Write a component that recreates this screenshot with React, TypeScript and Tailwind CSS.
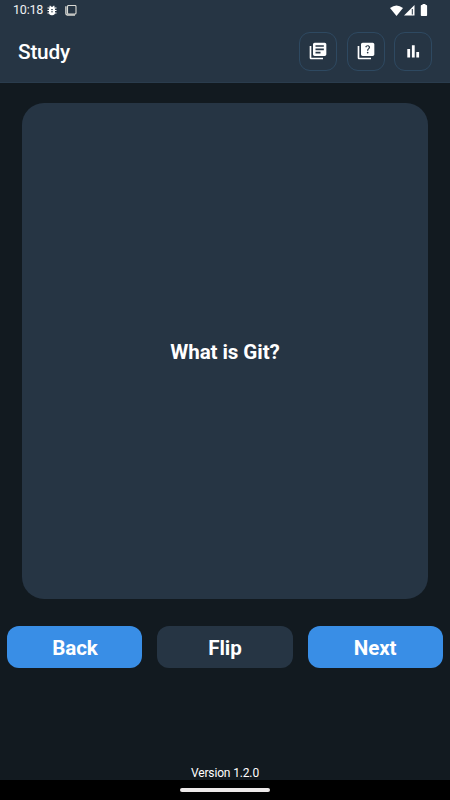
import type { ReactNode } from 'react';
import { MdLibraryBooks, MdQuiz } from 'react-icons/md';

function StatusBar() {
  return (
    <div className="flex h-5 items-center pl-[13px] pr-[22.5px]">
      <span className="w-[34px] text-[12.5px] leading-5 tracking-[-0.2px] text-[#f0f1f2]">10:18</span>
      <svg className="h-[11px] w-[10px] shrink-0" viewBox="0 0 10 11" fill="none" stroke="white">
        <path d="M.5 3H9.5M.5 5.5H9.5M.5 8H9.5M2.6.8L4 2.2M7.4.8L6 2.2" strokeWidth="1.2" />
        <rect x="2" y="1.8" width="6" height="8.4" rx="2.6" fill="white" stroke="none" />
        <path d="M4 4.6h2M4 6.8h2" stroke="#263544" strokeWidth=".8" />
      </svg>
      <svg className="ml-[8px] h-[11px] w-[12px]" viewBox="0 0 12 11" fill="none" stroke="#d9d9d4">
        <rect x="2.5" y="0.5" width="8.5" height="8.5" rx="1" strokeWidth="1.1" />
        <path d="M0.9 1.2v7.4a1.4 1.4 0 0 0 1.4 1.4H10" strokeWidth="1.4" />
      </svg>
      <svg className="ml-auto h-[11px] w-[13px]" viewBox="0 0 13 11" fill="white">
        <path d="M0 3Q6.5-2 13 3L6.5 11Z" />
      </svg>
      <svg className="ml-[1px] h-[11px] w-[11px]" viewBox="0 0 11 11">
        <path d="M0 10.5L10.5 0V10.5Z" fill="white" />
        <path d="M8.3 4V9.5" stroke="#263544" strokeWidth="1" />
      </svg>
      <svg className="ml-[5px] h-[12px] w-[8px]" viewBox="0 0 8 12" fill="white">
        <path d="M2.5 0h3v1H6.3a.8.8 0 0 1 .8.8v9.4a.8.8 0 0 1-.8.8H1.6a.8.8 0 0 1-.8-.8V1.8a.8.8 0 0 1 .8-.8h.9Z" />
      </svg>
    </div>
  );
}

function IconButton({ label, children }: { label: string; children: ReactNode }) {
  return (
    <button
      aria-label={label}
      className="flex h-[39px] w-[38px] items-center justify-center rounded-[11px] border border-[#2e4961]"
    >
      {children}
    </button>
  );
}

function ActionButton({ label, className }: { label: string; className: string }) {
  return (
    <button
      className={`flex h-[42px] flex-1 items-center justify-center rounded-xl pt-[2px] text-[20.6px] font-bold leading-6 tracking-[-0.1px] ${className}`}
    >
      {label}
    </button>
  );
}

export default function App() {
  return (
    <div className="flex h-[800px] w-[450px] flex-col overflow-hidden bg-[#121a20] font-[Roboto,'Liberation_Sans',sans-serif] text-white">
      <header className="h-[83px] shrink-0 border-b border-[#2a3c4d] bg-[#263544]">
        <StatusBar />
        <div className="flex h-[62px] items-center justify-between pl-[18px] pr-[18px]">
          <h1 className="pt-[2px] text-[20.8px] font-medium leading-6 tracking-[-0.2px]">Study</h1>
          <div className="flex gap-[9.3px]">
            <IconButton label="Library"><MdLibraryBooks className="size-5" /></IconButton>
            <IconButton label="Quiz"><MdQuiz className="size-5" /></IconButton>
            <IconButton label="Statistics">
              <svg className="h-[13px] w-[13px]" viewBox="0 0 13 13" fill="white">
                <path d="M.3 4h2.8v8.5H.3zM4.9.3h2.8v12.2H4.9zM9.3 7h2.8v5.5H9.3z" />
              </svg>
            </IconButton>
          </div>
        </div>
      </header>

      <main className="flex flex-1 flex-col pt-5">
        <section className="mx-[22.4px] flex h-[496px] items-center justify-center rounded-[22px] bg-[#263544]">
          <p className="pt-px text-[20.6px] font-bold leading-6 tracking-[-0.1px]">What is Git?</p>
        </section>
        <div className="mt-[27px] flex gap-[15px] px-[7.4px]">
          <ActionButton label="Back" className="bg-[#398ee6]" />
          <ActionButton label="Flip" className="bg-[#263544]" />
          <ActionButton label="Next" className="bg-[#398ee6]" />
        </div>
        <p className="mt-auto text-center text-[12px] leading-[14px] tracking-[-0.15px]">Version 1.2.0</p>
      </main>

      <footer className="flex h-5 shrink-0 items-center justify-center bg-black">
        <div className="h-[4px] w-[90px] rounded-full bg-[#ece8e8]" />
      </footer>
    </div>
  );
}
